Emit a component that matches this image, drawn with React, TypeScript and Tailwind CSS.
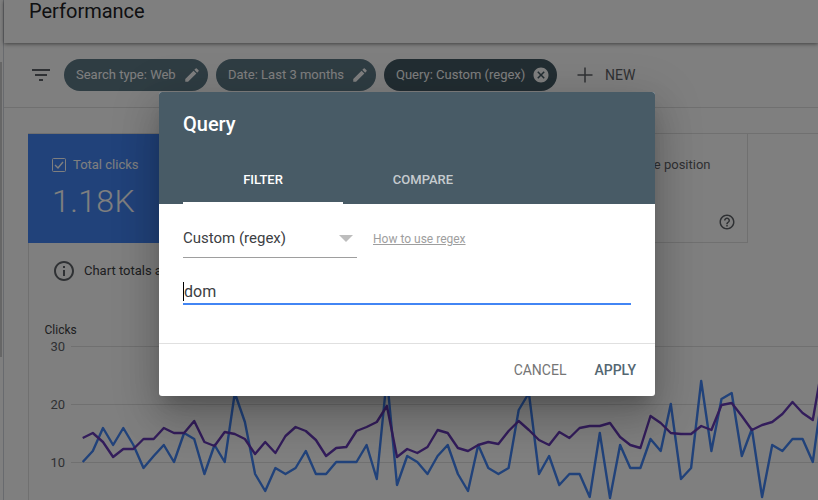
import { MdCancel, MdEdit, MdFilterList, MdHelpOutline, MdInfoOutline } from 'react-icons/md';

// y positions read off the reference, one point every 10.14px starting at x=82
const blue = [462, 451, 428, 445, 428, 445, 468, 456, 445, 462, 433, 439, 474, 445, 462, 393, 422, 474, 491, 468, 474, 468, 451, 474, 474, 462, 462, 462, 445, 479, 377, 485, 456, 462, 474, 456, 445, 474, 491, 445, 468, 474, 468, 410, 393, 474, 456, 485, 474, 474, 497, 433, 498, 445, 468, 468, 439, 451, 404, 479, 468, 381, 451, 399, 393, 456, 429, 497, 445, 451, 439, 439, 462, 388];
const purple = [438, 433, 442, 457, 449, 449, 439, 439, 428, 433, 433, 421, 442, 446, 432, 434, 439, 454, 442, 453, 436, 427, 431, 440, 456, 448, 447, 431, 427, 422, 406, 457, 449, 453, 447, 430, 433, 448, 451, 445, 442, 444, 431, 421, 430, 440, 445, 432, 438, 428, 426, 426, 423, 437, 445, 448, 416, 423, 433, 434, 434, 426, 430, 405, 403, 416, 430, 425, 422, 414, 402, 413, 420, 362];

const toPoints = (ys: number[]) => ys.map((y, i) => `${(81.7 + i * 10.14).toFixed(1)},${y}`).join(' ');

function Chip({ label, wide, dark }: { label: string; wide: string; dark?: boolean }) {
  return (
    <div className={`flex h-8 items-center justify-between rounded-full pl-3 pr-[7px] text-[13px] text-white ${wide} ${dark ? 'bg-[#455a64]' : 'bg-[#5f7a87]'}`}>
      <span>{label}</span>
      {dark ? <MdCancel className="h-[18px] w-[18px]" /> : <MdEdit className="h-[18px] w-[18px]" />}
    </div>
  );
}

function Chart() {
  return (
    <svg viewBox="28 320 790 180" className="block h-[180px] w-[790px]">
      <g stroke="#e0e0e0" strokeWidth="1">
        <line x1="70" x2="818" y1="346.5" y2="346.5" />
        <line x1="70" x2="818" y1="404.5" y2="404.5" />
        <line x1="70" x2="818" y1="462.5" y2="462.5" />
      </g>
      <g fill="#5f6368" fontSize="12" fontFamily="Roboto, sans-serif">
        <text x="43.5" y="334" fill="#3c4043">Clicks</text>
        <text x="64" y="351" textAnchor="end" fontSize="13">30</text>
        <text x="64" y="409" textAnchor="end" fontSize="13">20</text>
        <text x="64" y="467" textAnchor="end" fontSize="13">10</text>
      </g>
      <polyline points={toPoints(blue)} fill="none" stroke="#4285f4" strokeWidth="2.4" strokeLinejoin="round" />
      <polyline points={toPoints(purple)} fill="none" stroke="#673ab7" strokeWidth="2.4" strokeLinejoin="round" />
    </svg>
  );
}

function Page() {
  return (
    <div className="flex h-full">
      <div className="w-1 shrink-0 border-r border-gray-300 pt-[62px]">
        <div className="h-[295px] w-[2px] bg-[#cccccc]" />
      </div>
      <div className="flex min-w-0 flex-1 flex-col">
        <div className="relative h-[43px] shrink-0 bg-white pl-[25px] text-[20px] leading-[23px] text-[#202124] shadow-[0_1px_4px_rgba(0,0,0,0.5)]">
          Performance
        </div>
        <div className="flex h-[65px] shrink-0 items-center border-b border-[#e0e0e0] pl-[25px]">
          <MdFilterList className="h-6 w-6 text-[#5f6368]" />
          <div className="ml-[11px] flex gap-2">
            <Chip label="Search type: Web" wide="w-[144px]" />
            <Chip label="Date: Last 3 months" wide="w-[160px]" />
            <Chip label="Query: Custom (regex)" wide="w-[173px]" dark />
          </div>
          <svg viewBox="0 0 24 24" className="ml-4 h-6 w-6 text-[#5f6368]" fill="none" stroke="currentColor" strokeWidth="1.5">
            <path d="M12 4.5v15M4.5 12h15" />
          </svg>
          <span className="ml-2 text-[14px] text-[#5f6368]">NEW</span>
        </div>
        <div className="flex-1 pl-[24px] pt-[25px]">
          <div className="flex h-[110px] border-t border-[#e0e0e0]">
            <div className="w-[180px] bg-[#4285f4] pl-[24px] pt-[21px] text-white">
              <div className="flex items-center gap-[7px] text-[13px]">
                <svg viewBox="0 0 14 14" className="h-[14px] w-[14px]" fill="none" stroke="currentColor">
                  <rect x="0.5" y="0.5" width="13" height="13" rx="1" />
                  <path d="M3 7l3 3 5-6" strokeWidth="1.4" />
                </svg>
                Total clicks
              </div>
              <div className="mt-[6px] text-[32px] font-light leading-[40px] tracking-[0.4px]">1.18K</div>
            </div>
            <div className="w-[180px]" />
            <div className="w-[180px]" />
            <div className="relative w-[180px] border-r border-b border-[#e0e0e0] pl-[46px] pt-[21px] text-[13px] text-[#5f6368]">
              Average position
              <MdHelpOutline className="absolute bottom-[11px] right-[11px] h-[18px] w-[18px]" />
            </div>
          </div>
          <div className="border-l border-[#e0e0e0]">
            <div className="flex h-[55px] items-center pl-[23px] text-[13px] text-[#3c4043]">
              <MdInfoOutline className="mr-2 h-6 w-6 text-[#5f6368]" />
              Chart totals a
            </div>
            <div className="mt-[22px]">
              <Chart />
            </div>
          </div>
        </div>
      </div>
    </div>
  );
}

function QueryDialog() {
  return (
    <div className="absolute left-[159px] top-[92px] flex h-[304px] w-[496px] flex-col overflow-hidden rounded-[3px] bg-white shadow-[0_11px_15px_-7px_rgba(0,0,0,0.2),0_24px_38px_3px_rgba(0,0,0,0.14),0_9px_46px_8px_rgba(0,0,0,0.12)]">
      <div className="flex h-[112px] shrink-0 flex-col justify-between bg-[#485b66] pl-6 text-white">
        <div className="pt-[20px] text-[20px] font-medium leading-6">Query</div>
        <div className="flex text-[13px] font-medium">
          <div className="flex h-[48px] w-40 items-center justify-center border-b-2 border-white pt-[2px]">FILTER</div>
          <div className="flex h-[48px] w-40 items-center justify-center text-white/70">COMPARE</div>
        </div>
      </div>
      <div className="flex-1 pl-6">
        <div className="mt-4 flex items-center">
          <div className="flex h-[38px] w-[174px] items-center justify-between border-b border-[#9e9e9e] pr-[4px] text-[15px] text-[#3c4043]">
            Custom (regex)
            <div className="h-0 w-0 border-x-[7px] border-t-[7px] border-x-transparent border-t-[#bdbdbd]" />
          </div>
          <span className="ml-4 text-[12px] text-[#9e9e9e] underline">How to use regex</span>
        </div>
        <div className="mt-5 flex h-[27px] w-[448px] items-center border-b-2 border-[#4285f4] pt-[2px] text-[16px] text-[#3c4043]">
          <span className="border-l border-black leading-[19px]">dom</span>
        </div>
      </div>
      <div className="flex h-[53px] shrink-0 items-center justify-end gap-7 border-t border-[#e0e0e0] pr-[19px] text-[14px]">
        <span className="text-[#757575]">CANCEL</span>
        <span className="font-medium text-[#546772]">APPLY</span>
      </div>
    </div>
  );
}

export default function App() {
  return (
    <div className="relative h-[500px] w-[818px] overflow-hidden bg-white font-['Roboto',sans-serif]">
      <Page />
      <div className="absolute inset-0 bg-black/50" />
      <QueryDialog />
    </div>
  );
}
